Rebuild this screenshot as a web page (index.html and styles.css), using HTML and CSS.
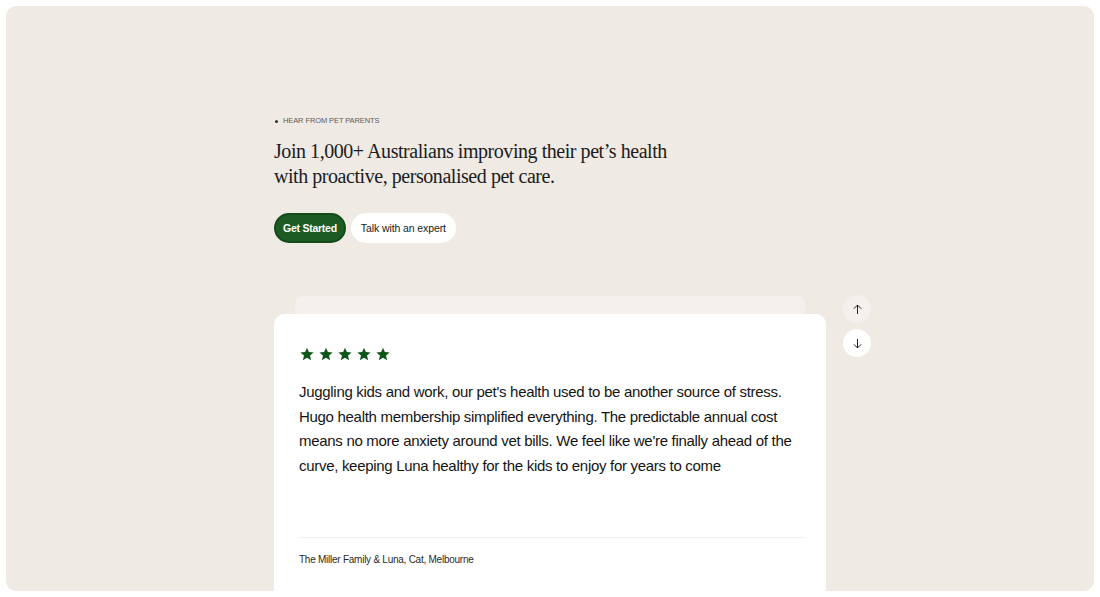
FILE: index.html
```html
<!DOCTYPE html>
<html lang="en">
<head>
    <meta charset="UTF-8">
    <meta name="viewport" content="width=device-width, initial-scale=1.0">
    <title>Hear from pet parents</title>
    <link rel="stylesheet" href="styles.css">
</head>
<body>
    <section class="panel">
        <div class="inner">
            <p class="eyebrow"><span class="dot"></span>Hear from pet parents</p>
            <h2 class="headline">Join 1,000+ Australians improving their pet’s health<br>with proactive, personalised pet care.</h2>

            <div class="actions">
                <button class="btn btn-primary">Get Started</button>
                <button class="btn btn-light">Talk with an expert</button>
            </div>

            <div class="slider">
                <div class="stack">
                    <div class="card-behind"></div>
                    <article class="card">
                        <div class="stars">
                            <!-- five star rating -->
                            <svg viewBox="0 0 24 24"><path d="M12 2.5l2.8 6.6 7.2.6-5.5 4.7 1.7 7-6.2-3.8-6.2 3.8 1.7-7L2 9.7l7.2-.6z"/></svg>
                            <svg viewBox="0 0 24 24"><path d="M12 2.5l2.8 6.6 7.2.6-5.5 4.7 1.7 7-6.2-3.8-6.2 3.8 1.7-7L2 9.7l7.2-.6z"/></svg>
                            <svg viewBox="0 0 24 24"><path d="M12 2.5l2.8 6.6 7.2.6-5.5 4.7 1.7 7-6.2-3.8-6.2 3.8 1.7-7L2 9.7l7.2-.6z"/></svg>
                            <svg viewBox="0 0 24 24"><path d="M12 2.5l2.8 6.6 7.2.6-5.5 4.7 1.7 7-6.2-3.8-6.2 3.8 1.7-7L2 9.7l7.2-.6z"/></svg>
                            <svg viewBox="0 0 24 24"><path d="M12 2.5l2.8 6.6 7.2.6-5.5 4.7 1.7 7-6.2-3.8-6.2 3.8 1.7-7L2 9.7l7.2-.6z"/></svg>
                        </div>
                        <p class="quote">Juggling kids and work, our pet's health used to be another source of stress.<br>Hugo health membership simplified everything. The predictable annual cost<br>means no more anxiety around vet bills. We feel like we're finally ahead of the<br>curve, keeping Luna healthy for the kids to enjoy for years to come</p>
                        <div class="author">The Miller Family &amp; Luna, Cat, Melbourne</div>
                    </article>
                </div>

                <div class="controls">
                    <button class="arrow arrow-off" aria-label="Previous">
                        <svg viewBox="0 0 16 16"><path d="M8 13.5V2.5M3.5 7l4.5-4.5 4.5 4.5"/></svg>
                    </button>
                    <button class="arrow" aria-label="Next">
                        <svg viewBox="0 0 16 16"><path d="M8 2.5v11M3.5 9l4.5 4.5 4.5-4.5"/></svg>
                    </button>
                </div>
            </div>
        </div>
    </section>
</body>
</html>
```

FILE: styles.css
```css
body {
    margin: 0;
    padding: 6px;
    background: #ffffff;
    font-family: "Liberation Sans", Arial, sans-serif;
    color: #1a1a1a;
}
.panel {
    height: 585px;
    background: #efeae4;
    border-radius: 10px;
    overflow: hidden;
}
.inner {
    padding: 110px 0 0 268px;
}
.eyebrow {
    display: flex;
    align-items: center;
    gap: 5px;
    margin: 0;
    font-size: 7.5px;
    letter-spacing: -0.1px;
    text-transform: uppercase;
    color: #5a5a5a;
    line-height: 10px;
}
.dot {
    width: 3px;
    height: 3px;
    border-radius: 50%;
    background: #333;
    margin-left: 1px;
}
.headline {
    margin: 13px 0 0;
    font-family: "Liberation Serif", "Times New Roman", serif;
    font-weight: normal;
    font-size: 20px;
    letter-spacing: -0.45px;
    line-height: 25px;
    color: #1c1c1c;
}
.actions {
    display: flex;
    gap: 5px;
    margin-top: 24px;
}
.btn {
    height: 30px;
    border-radius: 15px;
    font-family: "Liberation Sans", Arial, sans-serif;
    font-size: 10.5px;
    cursor: pointer;
}
.btn-primary {
    padding: 0 7px;
    background: #1d5b24;
    border: 2px solid #154a1b;
    color: #fff;
    font-weight: bold;
    letter-spacing: -0.25px;
}
.btn-light {
    padding: 0 10px;
    background: #fff;
    border: none;
    color: #1a1a1a;
    letter-spacing: -0.1px;
}
.slider {
    display: flex;
    align-items: flex-start;
    gap: 17px;
    margin-top: 53px;
}
.stack {
    width: 552px;
}
.card-behind {
    height: 18px;
    margin: 0 21px;
    background: #f5f0ee;
    border-radius: 8px 8px 0 0;
}
.card {
    background: #fff;
    border-radius: 10px;
    padding: 32px 21px 0 25px;
    height: 300px;
}
.stars {
    display: flex;
    gap: 3px;
}
.stars svg {
    width: 16px;
    height: 16px;
    fill: #0f5418;
}
.quote {
    margin: 18px 0 0;
    font-size: 15px;
    letter-spacing: -0.3px;
    line-height: 24.5px;
    color: #141414;
    height: 144px;
}
.author {
    margin-top: 13px;
    border-top: 1px solid #f2efec;
    padding-top: 16px;
    font-size: 10px;
    letter-spacing: -0.25px;
    color: #2a2a2a;
}
.controls {
    display: flex;
    flex-direction: column;
    gap: 6px;
    margin-top: -1px;
}
.arrow {
    width: 28px;
    height: 28px;
    border-radius: 50%;
    border: none;
    background: #fff;
    padding: 0;
    display: flex;
    align-items: center;
    justify-content: center;
    cursor: pointer;
}
.arrow-off {
    background: #f5f0ee;
}
.arrow svg {
    width: 13px;
    height: 13px;
    fill: none;
    stroke: #1a1a1a;
    stroke-width: 1.2;
}
```
